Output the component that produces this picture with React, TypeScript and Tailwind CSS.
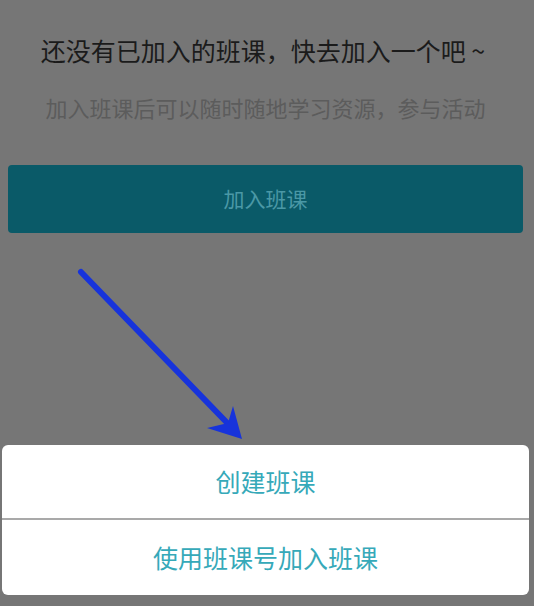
export default function App() {
  return (
    <div
      className="relative w-[534px] h-[606px] overflow-hidden bg-[#767676] flex flex-col"
      style={{ fontFamily: '"Noto Sans CJK SC", "Noto Sans", sans-serif' }}
    >
      {/* Empty state */}
      <div className="flex flex-col items-center pt-[34px]">
        <h1 className="text-[25px] leading-[32px] text-[#1b1b1b] font-normal pr-[8px]">
          还没有已加入的班课，快去加入一个吧 ~
        </h1>
        <p className="mt-[27px] text-[22px] leading-[28px] text-[#5c5c5c] pr-[3px]">
          加入班课后可以随时随地学习资源，参与活动
        </p>
      </div>

      <button className="mt-[44px] ml-[8px] mr-[11px] h-[68px] rounded-[4px] bg-[#0a5a68] text-[21px] text-[#4a98a6]">
        加入班课
      </button>

      <div className="flex-1" />

      {/* Action sheet */}
      <div className="ml-[2px] mr-[5px] mb-[11px] rounded-[6px] bg-white overflow-hidden">
        <div className="h-[75px] flex items-center justify-center text-[25px] text-[#36a9b9] border-b-2 border-[#a9a9a9]">
          创建班课
        </div>
        <div className="h-[75px] flex items-center justify-center text-[25px] text-[#36a9b9]">
          使用班课号加入班课
        </div>
      </div>

      {/* Annotation arrow */}
      <svg
        className="absolute left-0 top-0 pointer-events-none"
        width="534"
        height="606"
        viewBox="0 0 534 606"
      >
        <line x1="81" y1="272" x2="235" y2="431" stroke="#1733db" strokeWidth="6" strokeLinecap="round" />
        <path d="M242 439 L233 406 L228 423 L207 428 Z" fill="#1733db" />
      </svg>
    </div>
  )
}
